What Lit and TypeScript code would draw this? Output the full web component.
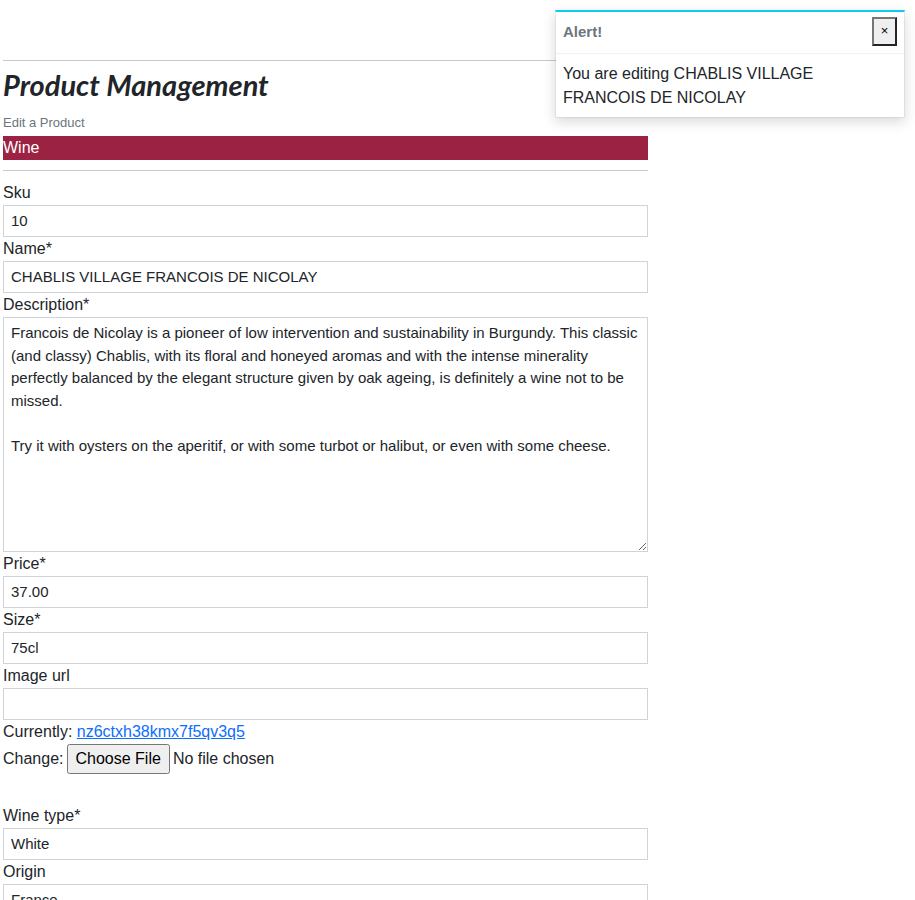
import { LitElement, html, css } from "lit";
import { customElement, state } from "lit/decorators.js";

interface Field {
  id: string;
  label: string;
  value: string;
  rows?: number;
}

const DESCRIPTION =
  "Francois de Nicolay is a pioneer of low intervention and sustainability in Burgundy. This classic (and classy) Chablis, with its floral and honeyed aromas and with the intense minerality perfectly balanced by the elegant structure given by oak ageing, is definitely a wine not to be missed.\n\nTry it with oysters on the aperitif, or with some turbot or halibut, or even with some cheese.";

const PRODUCT_FIELDS: Field[] = [
  { id: "sku", label: "Sku", value: "10" },
  { id: "name", label: "Name*", value: "CHABLIS VILLAGE FRANCOIS DE NICOLAY" },
  { id: "description", label: "Description*", value: DESCRIPTION, rows: 10 },
  { id: "price", label: "Price*", value: "37.00" },
  { id: "size", label: "Size*", value: "75cl" },
  { id: "image-url", label: "Image url", value: "" },
];

const WINE_FIELDS: Field[] = [
  { id: "wine-type", label: "Wine type*", value: "White" },
  { id: "origin", label: "Origin", value: "France" },
];

@customElement("app-root")
export class AppRoot extends LitElement {
  static styles = css`
    :host {
      display: block;
      height: 100vh;
      overflow: hidden;
      background: #fff;
      color: #212529;
      font-family: "Liberation Sans", Arial, sans-serif;
      font-size: 16px;
      line-height: 24px;
    }
    * {
      box-sizing: border-box;
    }
    .page {
      display: grid;
      grid-template-columns: 645fr 264fr;
      padding: 60px 3px 0;
    }
    .rule {
      height: 1px;
      margin: 0;
      border: 0;
      background: #c8c9ca;
    }
    .title {
      margin: 7px 0 9px;
      font-family: Lato, sans-serif;
      font-size: 29px;
      font-style: italic;
      font-weight: 700;
      line-height: 34px;
    }
    .subtitle {
      margin: 0 0 1px;
      color: #6c757d;
      font-size: 13px;
      font-weight: 400;
    }
    .category {
      margin: 0 0 10px;
      background: #9b2242;
      color: #fff;
    }
    .form {
      margin-top: 10px;
    }
    .label {
      display: block;
    }
    .control {
      display: block;
      width: 100%;
      height: 32px;
      margin: 0;
      padding: 3px 7px 5px;
      border: 1px solid #ced4da;
      border-radius: 0;
      background: #fff;
      color: #212529;
      font: inherit;
      font-size: 15px;
      line-height: 22px;
      outline: none;
    }
    .area {
      height: auto;
      padding: 4px 7px;
      line-height: 1.5;
      resize: vertical;
    }
    .file-row {
      display: flex;
      align-items: center;
      gap: 3px;
      margin-bottom: 30px;
    }
    .link {
      color: #0d6efd;
    }
    .file {
      font: inherit;
      line-height: 24px;
    }
    .file::file-selector-button {
      margin-inline-end: 3px;
      padding: 4px 7px;
    }
    .toast {
      position: absolute;
      top: 10px;
      right: 10px;
      width: 350px;
      max-width: 100%;
      border: 1px solid rgba(0, 0, 0, 0.05);
      border-top: 2px solid #0dcaf0;
      background: #fff;
      background-clip: padding-box;
      box-shadow: 0 4px 12px rgba(0, 0, 0, 0.15);
    }
    .toast-head {
      display: flex;
      align-items: flex-start;
      justify-content: space-between;
      padding: 5px 7px 7px;
      border-bottom: 1px solid rgba(0, 0, 0, 0.05);
      color: #6c757d;
      font-size: 15px;
      line-height: 29px;
    }
    .close {
      width: 25px;
      height: 29px;
      padding: 0 0 2px;
      border: 2px solid;
      border-color: #767676 #212529 #212529 #767676;
      background: #efefef;
      color: #000;
      font: inherit;
      font-size: 13px;
      line-height: 22px;
    }
    .toast-body {
      padding: 8px 7px 7px;
    }
  `;

  @state() private alertOpen = true;

  private renderField(f: Field) {
    return html`
      <label class="label" for=${f.id}>${f.label}</label>
      ${f.rows
        ? html`<textarea class="control area" id=${f.id} rows=${f.rows} .value=${f.value}></textarea>`
        : html`<input class="control" id=${f.id} type="text" .value=${f.value} />`}
    `;
  }

  render() {
    return html`
      <main class="page">
        <div>
          <hr class="rule" />
          <h1 class="title">Product Management</h1>
          <h2 class="subtitle">Edit a Product</h2>
          <p class="category">Wine</p>
          <hr class="rule" />
          <form class="form">
            ${PRODUCT_FIELDS.map((f) => this.renderField(f))}
            <div>Currently: <a class="link" href="#image">nz6ctxh38kmx7f5qv3q5</a></div>
            <div class="file-row">
              <label for="image-file">Change:</label>
              <input class="file" id="image-file" type="file" />
            </div>
            ${WINE_FIELDS.map((f) => this.renderField(f))}
          </form>
        </div>
      </main>
      ${this.alertOpen
        ? html`
            <div class="toast" role="alert">
              <div class="toast-head">
                <strong>Alert!</strong>
                <button class="close" type="button" aria-label="Close" @click=${() => (this.alertOpen = false)}>×</button>
              </div>
              <div class="toast-body">You are editing CHABLIS VILLAGE FRANCOIS DE NICOLAY</div>
            </div>
          `
        : null}
    `;
  }
}
